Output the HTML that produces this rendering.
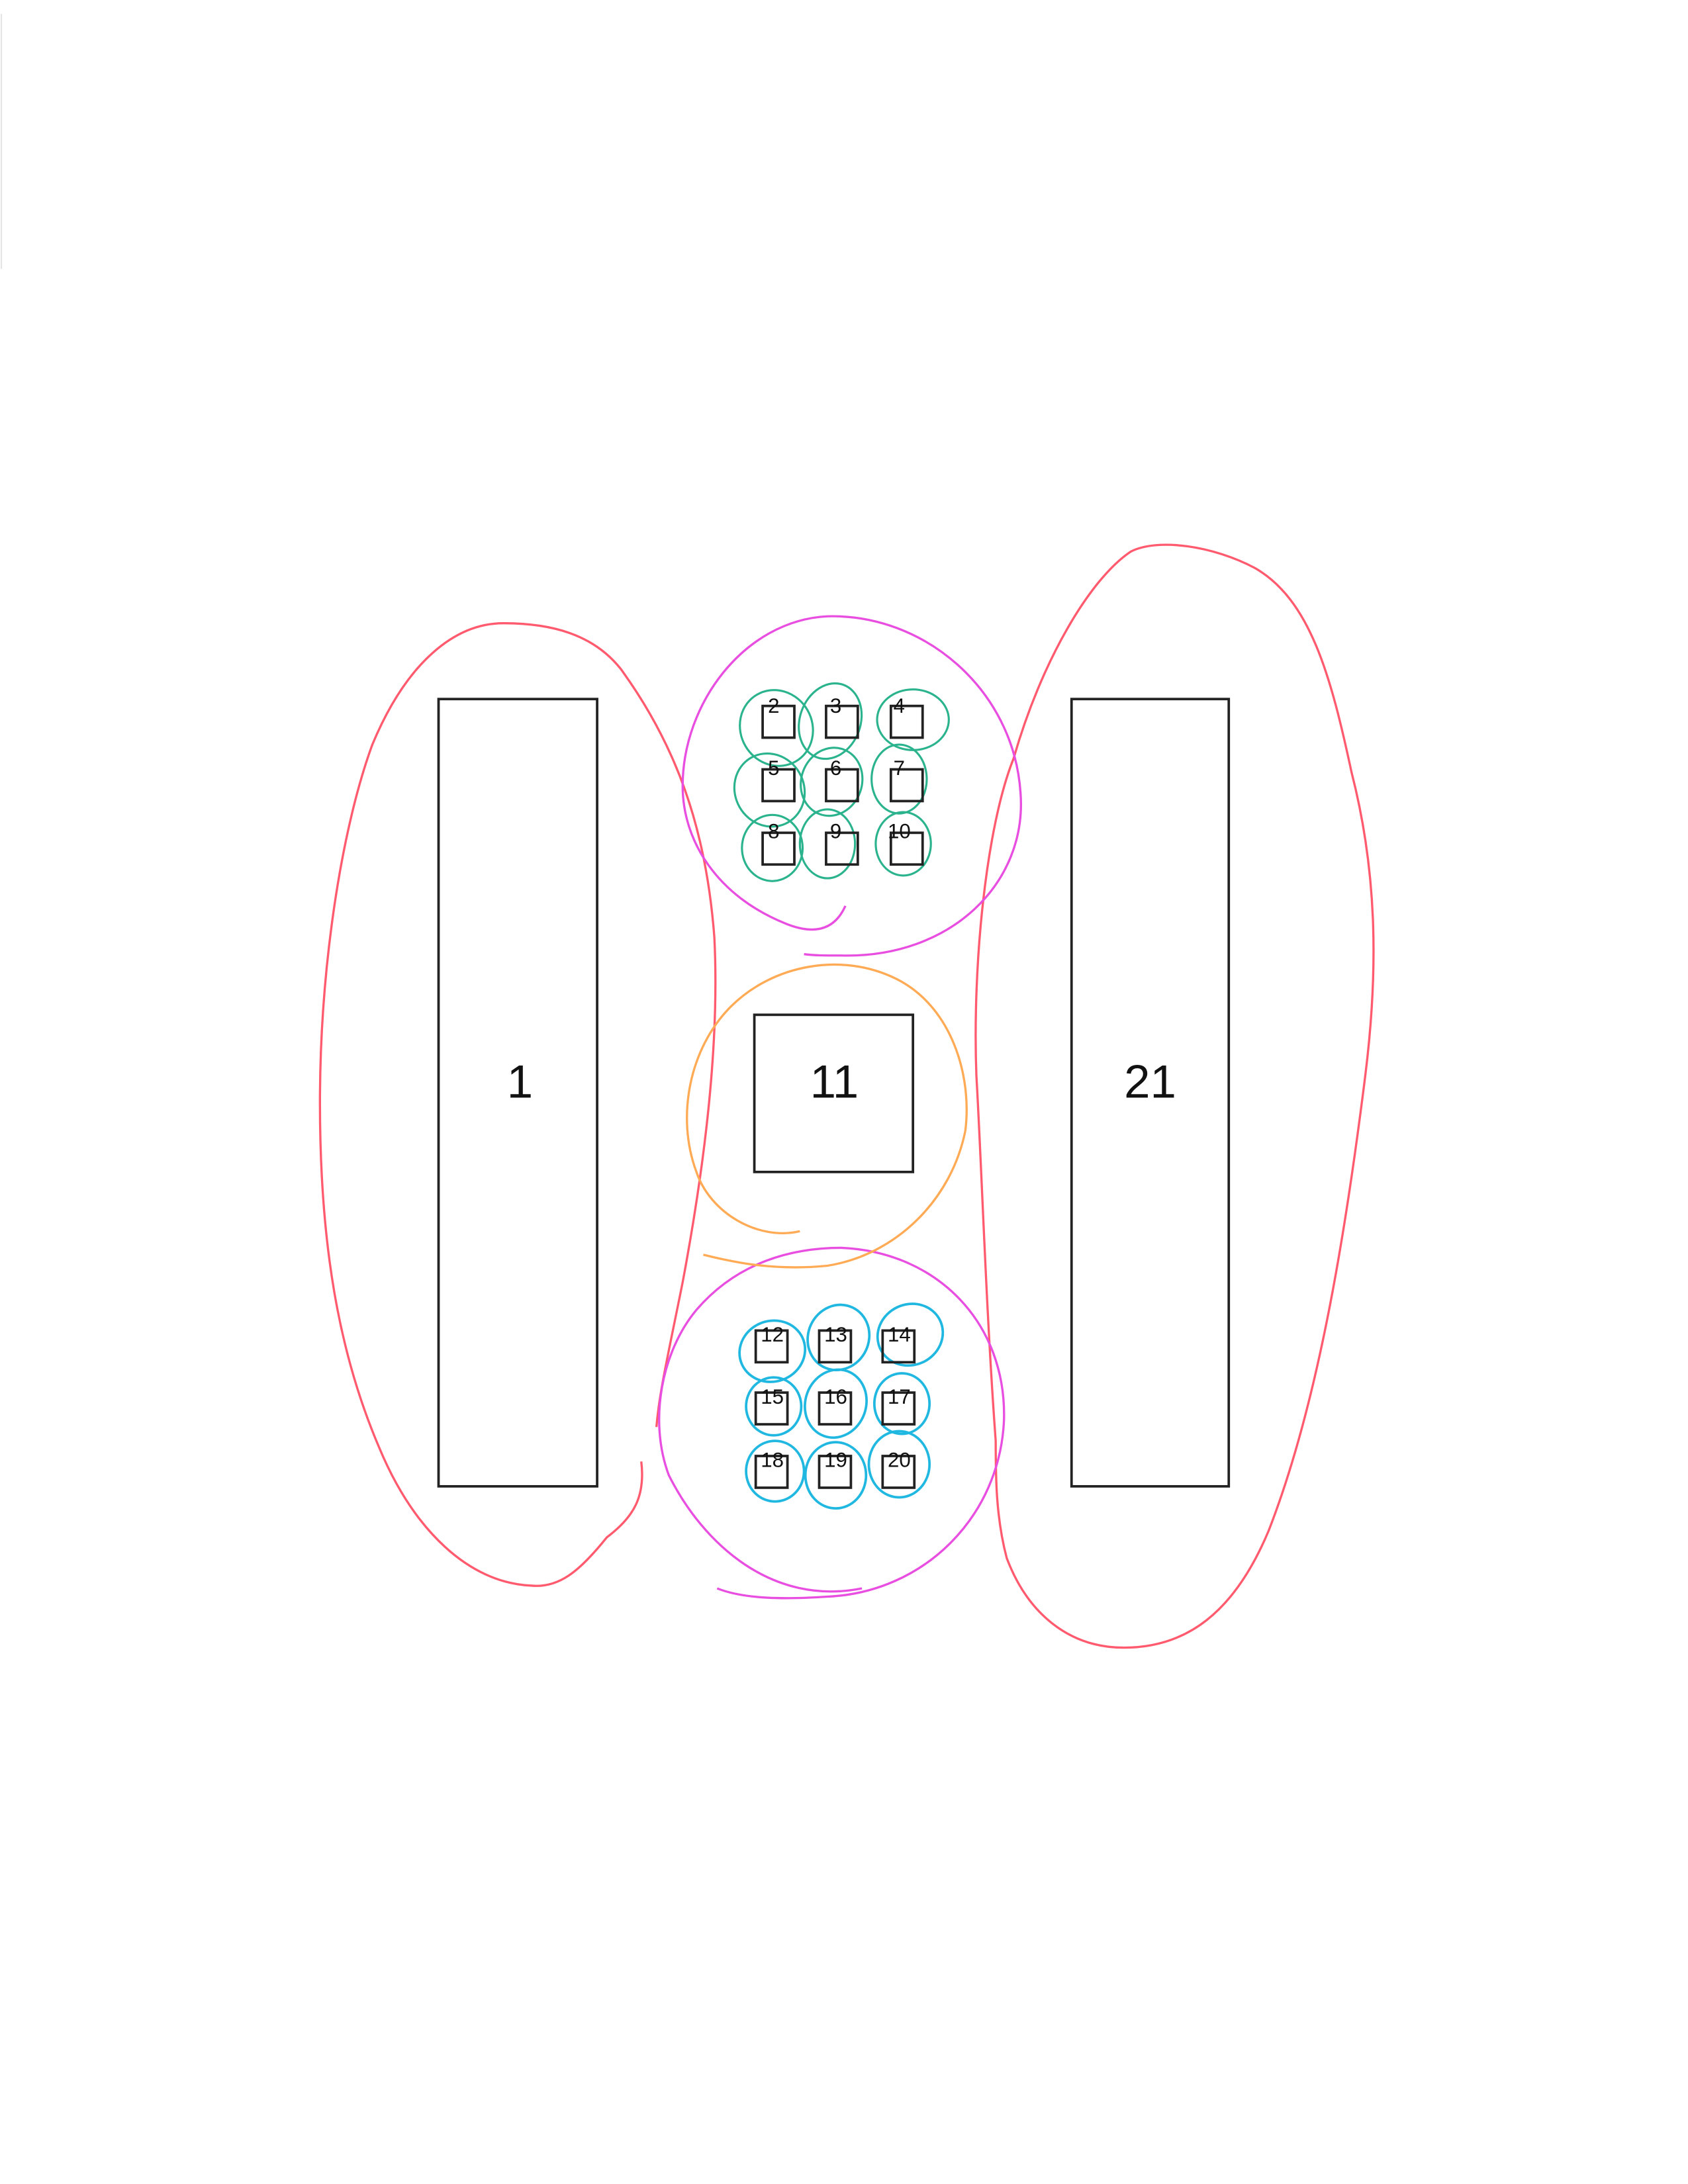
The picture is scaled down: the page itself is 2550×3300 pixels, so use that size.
<!DOCTYPE html>
<html><head><meta charset="utf-8"><style>
html,body{margin:0;padding:0;background:#fff;}
svg{display:block;}
text{font-family:"Liberation Sans",sans-serif;fill:#111;}
</style></head><body>
<svg width="2550" height="3300" viewBox="0 0 1224 1584" xmlns="http://www.w3.org/2000/svg">
<rect width="1224" height="1584" fill="#fff"/>
<line x1="1" y1="10" x2="1" y2="195" stroke="#e4e4e4" stroke-width="1"/>
<g fill="none" stroke-width="1.6">
<path d="M465,1060 C468,1085 460,1100 440,1115 C420,1140 405,1152 385,1150 C340,1148 300,1110 275,1050 C245,980 232,900 232,800 C232,700 248,600 270,540 C295,480 330,452 365,452 C400,452 430,460 450,485 C490,540 512,600 518,680 C522,760 510,850 495,930 C485,980 478,1010 476,1035" stroke="#ff5a6e"/>
<path d="M722,1045 C715,950 712,850 708,780 C705,700 715,600 735,550 C755,480 790,420 820,400 C840,390 880,396 910,412 C950,435 965,490 980,560 C998,630 1000,700 990,780 C975,900 955,1020 920,1110 C895,1170 860,1195 815,1195 C775,1195 745,1170 730,1130 C722,1100 722,1070 722,1045 Z" stroke="#ff5a6e"/>
<path d="M613,657 C605,675 590,678 570,670 C520,650 495,610 495,570 C495,510 540,450 600,447 C670,445 735,500 740,575 C745,640 690,695 610,693 C598,693 590,693 583,692" stroke="#e84ee0"/>
<path d="M625,1152 C560,1165 510,1120 485,1070 C470,1030 480,980 505,950 C535,915 575,905 610,905 C680,908 730,960 728,1030 C725,1100 670,1155 600,1158 C570,1160 540,1160 520,1152" stroke="#e84ee0"/>
<path d="M580,893 C550,900 515,880 505,850 C490,810 500,760 530,730 C560,700 610,690 650,710 C690,730 705,780 700,820 C690,870 650,910 600,918 C560,922 530,915 510,910" stroke="#ffaa55"/>
</g>
<g fill="none" stroke="#2ab38d" stroke-width="1.5">
<ellipse cx="563" cy="528" rx="26" ry="28" transform="rotate(-30 563 528)"/>
<ellipse cx="602" cy="523" rx="22" ry="28" transform="rotate(20 602 523)"/>
<ellipse cx="662" cy="522" rx="26" ry="22"/>
<ellipse cx="558" cy="573" rx="25" ry="27" transform="rotate(-30 558 573)"/>
<ellipse cx="603" cy="567" rx="22" ry="25" transform="rotate(20 603 567)"/>
<ellipse cx="652" cy="565" rx="20" ry="25"/>
<ellipse cx="560" cy="615" rx="22" ry="24"/>
<ellipse cx="600" cy="612" rx="20" ry="25"/>
<ellipse cx="655" cy="612" rx="20" ry="23"/>
</g>
<g fill="none" stroke="#20b8e0" stroke-width="1.8">
<ellipse cx="560" cy="980" rx="24" ry="22" transform="rotate(-20 560 980)"/>
<ellipse cx="608" cy="970" rx="22" ry="24" transform="rotate(25 608 970)"/>
<ellipse cx="660" cy="968" rx="24" ry="22" transform="rotate(-25 660 968)"/>
<ellipse cx="561" cy="1020" rx="20" ry="21"/>
<ellipse cx="606" cy="1018" rx="22" ry="25" transform="rotate(20 606 1018)"/>
<ellipse cx="654" cy="1018" rx="20" ry="22"/>
<ellipse cx="562" cy="1067" rx="21" ry="22"/>
<ellipse cx="606" cy="1070" rx="22" ry="24"/>
<ellipse cx="652" cy="1062" rx="22" ry="24"/>
</g>
<g fill="none" stroke="#222" stroke-width="1.8">
<rect x="318" y="507" width="115" height="571"/>
<rect x="777" y="507" width="114" height="571"/>
<rect x="547" y="736" width="115" height="114"/>
</g>
<text x="377" y="796" font-size="34" text-anchor="middle">1</text>
<text x="605" y="796" font-size="34" text-anchor="middle">11</text>
<text x="834" y="796" font-size="34" text-anchor="middle">21</text>
<g fill="none" stroke="#222" stroke-width="1.8">
<rect x="553" y="512" width="23" height="23"/><rect x="599" y="512" width="23" height="23"/><rect x="646" y="512" width="23" height="23"/>
<rect x="553" y="558" width="23" height="23"/><rect x="599" y="558" width="23" height="23"/><rect x="646" y="558" width="23" height="23"/>
<rect x="553" y="604" width="23" height="23"/><rect x="599" y="604" width="23" height="23"/><rect x="646" y="604" width="23" height="23"/>
<rect x="548" y="965" width="23" height="23"/><rect x="594" y="965" width="23" height="23"/><rect x="640" y="965" width="23" height="23"/>
<rect x="548" y="1010" width="23" height="23"/><rect x="594" y="1010" width="23" height="23"/><rect x="640" y="1010" width="23" height="23"/>
<rect x="548" y="1056" width="23" height="23"/><rect x="594" y="1056" width="23" height="23"/><rect x="640" y="1056" width="23" height="23"/>
</g>
<g font-size="15" text-anchor="middle">
<text x="561" y="517">2</text><text x="606" y="517">3</text><text x="652" y="517">4</text>
<text x="561" y="562">5</text><text x="606" y="562">6</text><text x="652" y="562">7</text>
<text x="561" y="608">8</text><text x="606" y="608">9</text><text x="652" y="608">10</text>
<text x="560" y="973">12</text><text x="606" y="973">13</text><text x="652" y="973">14</text>
<text x="560" y="1018">15</text><text x="606" y="1018">16</text><text x="652" y="1018">17</text>
<text x="560" y="1064">18</text><text x="606" y="1064">19</text><text x="652" y="1064">20</text>
</g>
</svg>
</body></html>
